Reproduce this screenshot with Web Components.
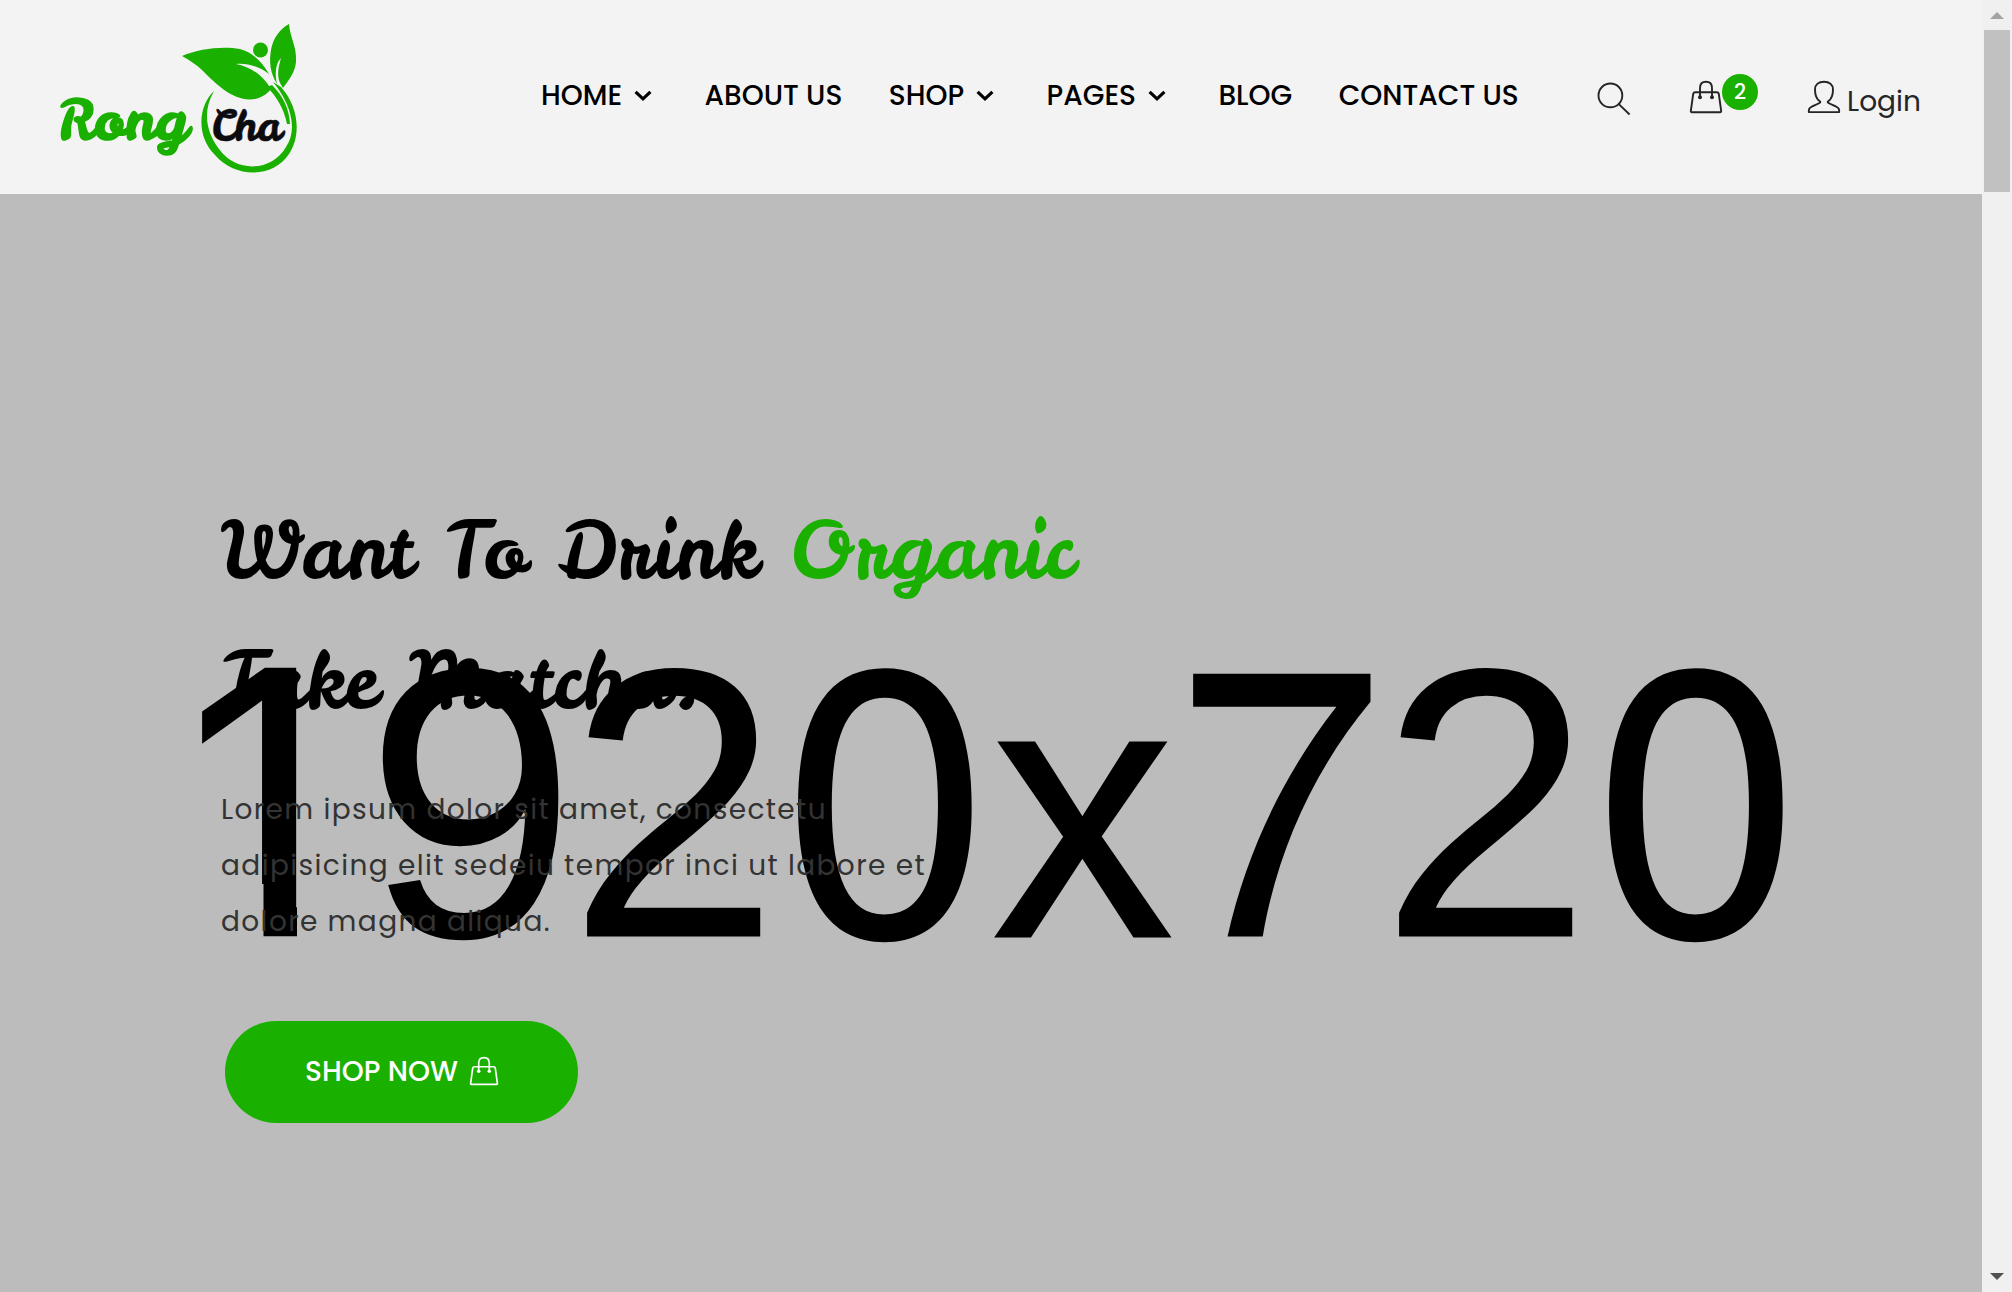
<!DOCTYPE html>
<html lang="en">
<head>
<meta charset="utf-8">
<title>Rong Cha</title>
<style>
html,body{margin:0;height:100%;overflow:hidden}
body{font-family:Poppins,Inter,"Open Sans",sans-serif;color:#000;--script:"Leckerli One"}
</style>
</head>
<body>
<shop-page></shop-page>
<script>
const define=(name,html,ready)=>{
  const t=document.createElement('template');t.innerHTML=html;
  customElements.define(name,class extends HTMLElement{
    connectedCallback(){
      if(this.shadowRoot)return;
      this.attachShadow({mode:'open'}).append(t.content.cloneNode(true));
      if(ready)ready.call(this,this.shadowRoot);
    }
  });
};

/* One line of text, tracked to fill the width given in "w". */
define('fit-text',`<style>:host{display:block;white-space:nowrap;flex:none}span{display:inline-block}</style><span><slot></slot></span>`,function(r){
  const w=+this.getAttribute('w'),s=r.querySelector('span');
  this.style.width=w+'px';
  const n=this.textContent.length;
  s.style.letterSpacing=((w-s.getBoundingClientRect().width)/n)+'px';
});

define('bag-icon',`<style>:host{display:block;flex:none;width:34px;height:34px}svg{display:block;width:100%;height:100%}</style>
<svg viewBox="0 0 34 34" fill="none" stroke="currentColor" stroke-width="1.9" stroke-linejoin="round"><path d="M6.2 12.2H27.8Q29.4 12.2 29.8 13.8L32.2 31.2Q32.3 32.2 31.2 32.2H2.8Q1.7 32.2 1.8 31.2L4.2 13.8Q4.6 12.2 6.2 12.2Z"/><path d="M11 17V8.2Q11 1.8 17 1.8T23 8.2V17"/><g fill="currentColor" stroke="none"><circle cx="11" cy="17.3" r="2"/><circle cx="23" cy="17.3" r="2"/></g></svg>`);
define('search-icon',`<style>:host{display:block;flex:none;width:34px;height:34px}svg{display:block}</style>
<svg width="34" height="34" fill="none" stroke="currentColor" stroke-width="1.9"><circle cx="13.4" cy="13.4" r="11.9"/><path d="M21.3 21.6L32.6 32.5"/></svg>`);
define('user-icon',`<style>:host{display:block;flex:none;width:34px;height:34px}svg{display:block}</style>
<svg width="34" height="34" fill="none" stroke="currentColor" stroke-width="1.9" stroke-linejoin="round"><path d="M17 1.8C11.7 1.8 8 4.6 8 9.5C8 14.4 8.8 18.6 12.8 21.3Q13.8 22 12.8 22.8C9.8 25 3.4 26.2 2.2 28.8Q1.8 29.7 1.8 32.1H32.2Q32.2 29.7 31.8 28.8C30.6 26.2 24.2 25 21.2 22.8Q20.2 22 21.2 21.3C25.2 18.6 26 14.4 26 9.5C26 4.6 22.3 1.8 17 1.8Z"/></svg>`);

define('brand-logo',`<style>:host{display:block;flex:none;width:240px;height:160px}svg{display:block}text{font-family:var(--script),Lato,cursive}</style>
<svg width="240" height="160" viewBox="60 20 240 160" fill="#1ab000">
<path d="M182 56C200 48 224 46 240 49C252 52 262 62 269 74C260 67 248 63 236 64C250 67 262 74 271 89C266 96 257 99.500 250 99.500C231 99 216 84 203 71C196 64 189 60 182 56Z"/>
<path d="M289 24C290 38 297 46 296 62C295 73 288 81 283 88L280 83C277 76 278 68 281 58C275 64 275 75 277 84C270 73 269 61 271 50C273 38 280 29 289 24Z"/>
<circle cx="260.500" cy="50" r="7.500"/>
<path d="M214 91C197 107 197 138 215 155C236 179 273 178 289 154C302 134 298 106 281 87L273 82C289 101 299 128 286 147C271 173 235 172 219 149C205 130 203 110 214 91Z"/>
<path d="M267 87C276 96 284 108 287 124L290 124C289 108 283 96 272 85Z"/>
<text x="57.500" y="140" font-size="56" textLength="130" lengthAdjust="spacingAndGlyphs" stroke="#1ab000" stroke-width="1.500">Rong</text>
<text x="211" y="141" font-size="42" fill="#0b0b10" textLength="70.500" lengthAdjust="spacingAndGlyphs" stroke="#0b0b10" stroke-width=".6">Cha</text>
</svg>`);

define('nav-item',`<style>:host{display:flex;align-items:center;flex:none;height:42px;font-weight:500;font-size:28px;line-height:42px}svg{display:none;margin:0 6px 0 12px}:host([menu]) svg{display:block}</style>
<slot></slot><svg width="18" height="12" fill="none" stroke="currentColor" stroke-width="3.2"><path d="M1.6 1.800L9 8.800L16.400 1.800"/></svg>`);

define('site-header',`<style>
:host{display:flex;height:194px;background:#f3f3f3;flex:none}
brand-logo{margin:20px 0 0 60px}
nav{display:flex;margin:75px 0 0 241px;gap:46.5px}
.tools{display:flex;color:#252525;margin:80px 61px 0 auto;align-items:flex-start}
search-icon{margin-top:2px}
.cart{display:flex;margin-left:58px}
.badge{width:36px;height:36px;border-radius:50%;background:#1ab000;color:#fff;font-weight:500;font-size:21px;line-height:36px;text-align:center;margin:-6px 0 0 -1px}
user-icon{margin-left:49px}
.login{font-size:28px;line-height:42px;margin:1px 0 0 6px}
</style>
<brand-logo></brand-logo>
<nav>
<nav-item menu>HOME</nav-item>
<nav-item>ABOUT US</nav-item>
<nav-item menu>SHOP</nav-item>
<nav-item menu>PAGES</nav-item>
<nav-item>BLOG</nav-item>
<nav-item>CONTACT US</nav-item>
</nav>
<div class="tools"><search-icon></search-icon><div class="cart"><bag-icon></bag-icon><div class="badge">2</div></div><user-icon></user-icon><fit-text class="login" w="74">Login</fit-text></div>`);

define('hero-backdrop',`<style>:host{display:block;position:absolute;inset:0}svg{display:block}text{font-family:"TeX Gyre Heros",FreeSans,"Liberation Sans",sans-serif;font-size:374px}tspan{font-family:"Liberation Sans",Arial,sans-serif;font-size:380px}.one{font-size:386px}.by{font-size:363px;stroke:#000;stroke-width:2px}</style>
<svg width="1982" height="1098"><clipPath id="c"><path d="M0 0H297V690H0ZM263.500 680H297V742.500H263.500ZM372 0H1982V1098H372Z"/></clipPath>
<g clip-path="url(#c)"><text transform="translate(0 742.500) scale(1 1.012)" x="165 365 568 782 992 1176 1380 1593" y="0"><tspan class="one">1</tspan><tspan>92</tspan>0<tspan class="by">x</tspan>7<tspan>2</tspan>0</text></g></svg>`);

define('hero-copy',`<style>
:host{display:block;position:relative;padding:291px 0 0 221px}
h1{margin:0;font:400 78px/130px var(--script),Lato,cursive;height:260px;white-space:nowrap}
.green{color:#1ab000}
p{margin:37px 0 0;font-size:28px;line-height:56px;color:#333}
a{display:flex;box-sizing:border-box;width:353px;height:102px;border-radius:51px;background:#1ab000;color:#fff;margin:71px 0 0 4px;padding-left:80px;align-items:center;font-weight:500;font-size:28px;line-height:42px}
bag-icon{width:30px;height:30px;margin:0 0 2px 11px}
</style>
<h1>Want To Drink <span class="green">Organic</span><br>Take Matcha.</h1>
<p><fit-text w="606">Lorem ipsum dolor sit amet, consectetu</fit-text><fit-text w="705">adipisicing elit sedeiu tempor inci ut labore et</fit-text><fit-text w="330">dolore magna aliqua.</fit-text></p>
<a><fit-text w="153">SHOP NOW</fit-text><bag-icon></bag-icon></a>`);

define('hero-banner',`<style>:host{display:block;position:relative;flex:1;background:#bcbcbc;overflow:hidden}</style><hero-backdrop></hero-backdrop><hero-copy></hero-copy>`);

define('scroll-rail',`<style>:host{display:flex;flex-direction:column;align-items:center;width:30px;background:#f0f0f0;flex:none}
svg{display:block}.thumb{width:26px;height:162px;background:#c1c1c1}.down{margin-top:auto}</style>
<svg width="30" height="30"><path d="M8 19L15 12L22 19Z" fill="#a3a3a3"/></svg><div class="thumb"></div><svg class="down" width="30" height="30"><path d="M8 11L15 18L22 11Z" fill="#505050"/></svg>`);

define('shop-page',`<style>:host{display:flex;width:2012px;height:1292px}main{display:flex;flex-direction:column;width:1982px}</style><main><site-header></site-header><hero-banner></hero-banner></main><scroll-rail></scroll-rail>`);
</script>
</body>
</html>
